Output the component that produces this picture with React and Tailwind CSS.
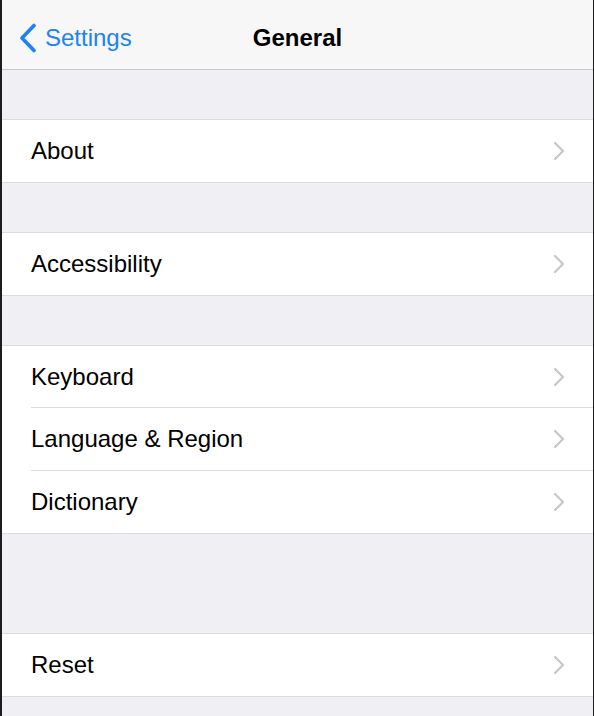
const groups = [
  { gap: 'h-[49px]', items: ['About'] },
  { gap: 'h-[49px]', items: ['Accessibility'] },
  { gap: 'h-[49px]', items: ['Keyboard', 'Language & Region', 'Dictionary'] },
  { gap: 'h-[99px]', items: ['Reset'] },
]

function Chevron() {
  return (
    <svg width="14" height="22" viewBox="0 0 14 22" fill="none">
      <path d="M3 3 L11 11 L3 19" stroke="#c7c7cb" strokeWidth="2.2" strokeLinecap="round" strokeLinejoin="round" />
    </svg>
  )
}

function Row({ label, last, tall }) {
  return (
    <div className={`flex items-stretch bg-white pl-[29px] ${tall ? 'h-[63px]' : 'h-[62px]'}`}>
      <div
        className={`flex flex-1 items-center justify-between pr-[27px] ${
          last ? '' : 'border-b border-[#dcdce0]'
        }`}
      >
        <span className="text-[24px] text-black">{label}</span>
        <Chevron />
      </div>
    </div>
  )
}

export default function App() {
  return (
    <div
      className="h-[716px] w-[594px] overflow-hidden border-l-2 border-r border-[#1c1c1e] bg-[#efeff4]"
      style={{ fontFamily: '"Liberation Sans", Arial, sans-serif' }}
    >
      {/* Nav bar */}
      <div className="relative flex h-[70px] items-center border-b border-[#c8c7cc] bg-[#f7f7f7] pt-[7px]">
        <button className="flex items-center pl-[15px] text-[#1a82fb]">
          <svg width="22" height="30" viewBox="0 0 22 30" fill="none">
            <path d="M17 2.5 L5 15 L17 27.5" stroke="currentColor" strokeWidth="3.6" strokeLinecap="round" strokeLinejoin="round" />
          </svg>
          <span className="ml-[6px] text-[24px]">Settings</span>
        </button>
        <h1 className="absolute left-1/2 -translate-x-1/2 text-[24px] font-bold text-black">General</h1>
      </div>

      {groups.map((g, i) => (
        <div key={i}>
          <div className={g.gap} />
          <div className="border-y border-[#dcdce0]">
            {g.items.map((item, j) => (
              <Row
                key={item}
                label={item}
                last={j === g.items.length - 1}
                tall={g.items.length > 1 && j === 1}
              />
            ))}
          </div>
        </div>
      ))}
    </div>
  )
}
